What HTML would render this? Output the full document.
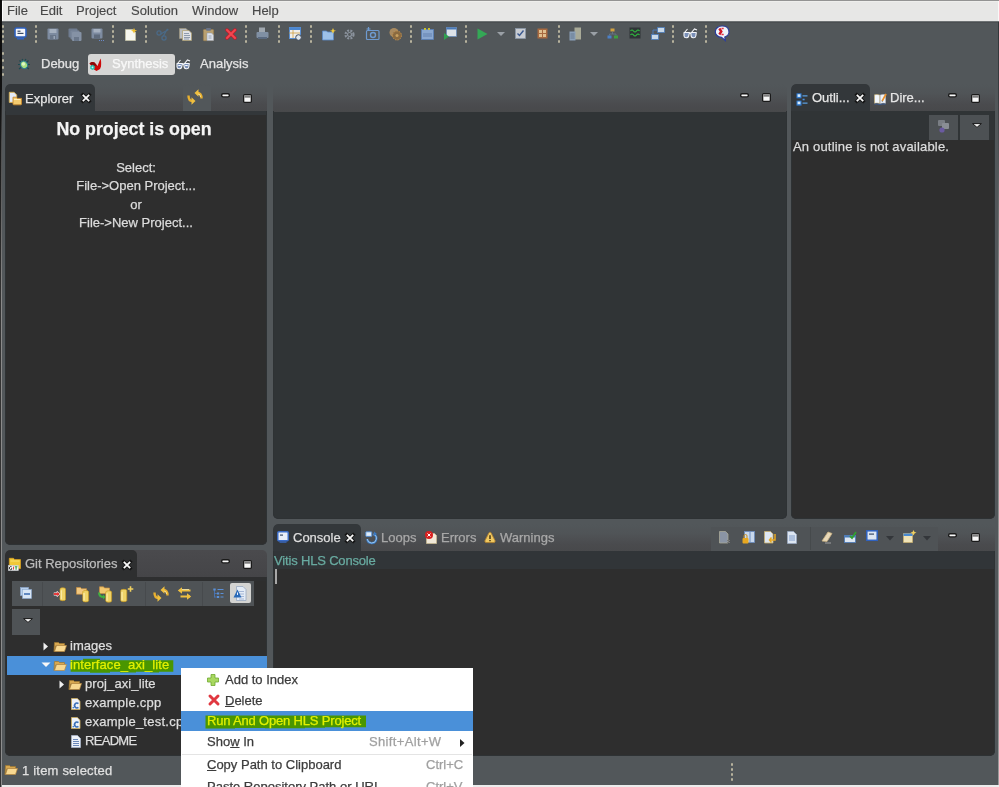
<!DOCTYPE html><html><head><meta charset="utf-8"><style>
*{margin:0;padding:0;box-sizing:border-box}
html,body{width:999px;height:787px;overflow:hidden;background:#52575a;font-family:"Liberation Sans",sans-serif;font-size:13px;color:#dcdcdc;-webkit-font-smoothing:antialiased}
.a{position:absolute}
svg.a{overflow:visible}
.t{position:absolute;white-space:nowrap;line-height:13px;height:13px;will-change:transform;-webkit-text-stroke:0.25px currentColor}
.tt{color:#e6e6e6}
.ti{color:#a8a8a8}
</style></head><body>
<div class="a" style="left:0px;top:0px;width:999px;height:1px;background:#939393;"></div>
<div class="a" style="left:0px;top:1px;width:999px;height:1px;background:#eeeeec;"></div>
<div class="a" style="left:1px;top:2px;width:998px;height:19px;background:#e7e7e6;"></div>
<div class="a" style="left:2px;top:1px;width:1px;height:20px;background:#fbfbfb;"></div>
<div class="a" style="left:0px;top:21px;width:999px;height:1px;background:#6e7274;"></div>
<div class="a" style="left:0px;top:22px;width:999px;height:1px;background:#4a4e51;"></div>
<div class="t " style="left:7px;top:3.5px;color:#484848;-webkit-text-stroke:0.15px #484848">File</div>
<div class="t " style="left:40px;top:3.5px;color:#484848;-webkit-text-stroke:0.15px #484848">Edit</div>
<div class="t " style="left:76px;top:3.5px;color:#484848;-webkit-text-stroke:0.15px #484848">Project</div>
<div class="t " style="left:130.5px;top:3.5px;color:#484848;-webkit-text-stroke:0.15px #484848">Solution</div>
<div class="t " style="left:191.5px;top:3.5px;color:#484848;-webkit-text-stroke:0.15px #484848">Window</div>
<div class="t " style="left:252.2px;top:3.5px;color:#484848;-webkit-text-stroke:0.15px #484848">Help</div>
<div class="a" style="left:2px;top:25px;width:2px;height:3px;background:#b8b39e;border-radius:1px"></div><div class="a" style="left:2px;top:30px;width:2px;height:3px;background:#b8b39e;border-radius:1px"></div><div class="a" style="left:2px;top:35px;width:2px;height:3px;background:#b8b39e;border-radius:1px"></div><div class="a" style="left:2px;top:40px;width:2px;height:3px;background:#b8b39e;border-radius:1px"></div>
<div class="a" style="left:35px;top:25px;width:2px;height:3px;background:#b8b39e;border-radius:1px"></div><div class="a" style="left:35px;top:30px;width:2px;height:3px;background:#b8b39e;border-radius:1px"></div><div class="a" style="left:35px;top:35px;width:2px;height:3px;background:#b8b39e;border-radius:1px"></div><div class="a" style="left:35px;top:40px;width:2px;height:3px;background:#b8b39e;border-radius:1px"></div>
<div class="a" style="left:112px;top:25px;width:2px;height:3px;background:#b8b39e;border-radius:1px"></div><div class="a" style="left:112px;top:30px;width:2px;height:3px;background:#b8b39e;border-radius:1px"></div><div class="a" style="left:112px;top:35px;width:2px;height:3px;background:#b8b39e;border-radius:1px"></div><div class="a" style="left:112px;top:40px;width:2px;height:3px;background:#b8b39e;border-radius:1px"></div>
<div class="a" style="left:145px;top:25px;width:2px;height:3px;background:#b8b39e;border-radius:1px"></div><div class="a" style="left:145px;top:30px;width:2px;height:3px;background:#b8b39e;border-radius:1px"></div><div class="a" style="left:145px;top:35px;width:2px;height:3px;background:#b8b39e;border-radius:1px"></div><div class="a" style="left:145px;top:40px;width:2px;height:3px;background:#b8b39e;border-radius:1px"></div>
<div class="a" style="left:245px;top:25px;width:2px;height:3px;background:#b8b39e;border-radius:1px"></div><div class="a" style="left:245px;top:30px;width:2px;height:3px;background:#b8b39e;border-radius:1px"></div><div class="a" style="left:245px;top:35px;width:2px;height:3px;background:#b8b39e;border-radius:1px"></div><div class="a" style="left:245px;top:40px;width:2px;height:3px;background:#b8b39e;border-radius:1px"></div>
<div class="a" style="left:278px;top:25px;width:2px;height:3px;background:#b8b39e;border-radius:1px"></div><div class="a" style="left:278px;top:30px;width:2px;height:3px;background:#b8b39e;border-radius:1px"></div><div class="a" style="left:278px;top:35px;width:2px;height:3px;background:#b8b39e;border-radius:1px"></div><div class="a" style="left:278px;top:40px;width:2px;height:3px;background:#b8b39e;border-radius:1px"></div>
<div class="a" style="left:310px;top:25px;width:2px;height:3px;background:#b8b39e;border-radius:1px"></div><div class="a" style="left:310px;top:30px;width:2px;height:3px;background:#b8b39e;border-radius:1px"></div><div class="a" style="left:310px;top:35px;width:2px;height:3px;background:#b8b39e;border-radius:1px"></div><div class="a" style="left:310px;top:40px;width:2px;height:3px;background:#b8b39e;border-radius:1px"></div>
<div class="a" style="left:410px;top:25px;width:2px;height:3px;background:#b8b39e;border-radius:1px"></div><div class="a" style="left:410px;top:30px;width:2px;height:3px;background:#b8b39e;border-radius:1px"></div><div class="a" style="left:410px;top:35px;width:2px;height:3px;background:#b8b39e;border-radius:1px"></div><div class="a" style="left:410px;top:40px;width:2px;height:3px;background:#b8b39e;border-radius:1px"></div>
<div class="a" style="left:465px;top:25px;width:2px;height:3px;background:#b8b39e;border-radius:1px"></div><div class="a" style="left:465px;top:30px;width:2px;height:3px;background:#b8b39e;border-radius:1px"></div><div class="a" style="left:465px;top:35px;width:2px;height:3px;background:#b8b39e;border-radius:1px"></div><div class="a" style="left:465px;top:40px;width:2px;height:3px;background:#b8b39e;border-radius:1px"></div>
<div class="a" style="left:558px;top:25px;width:2px;height:3px;background:#b8b39e;border-radius:1px"></div><div class="a" style="left:558px;top:30px;width:2px;height:3px;background:#b8b39e;border-radius:1px"></div><div class="a" style="left:558px;top:35px;width:2px;height:3px;background:#b8b39e;border-radius:1px"></div><div class="a" style="left:558px;top:40px;width:2px;height:3px;background:#b8b39e;border-radius:1px"></div>
<div class="a" style="left:672px;top:25px;width:2px;height:3px;background:#b8b39e;border-radius:1px"></div><div class="a" style="left:672px;top:30px;width:2px;height:3px;background:#b8b39e;border-radius:1px"></div><div class="a" style="left:672px;top:35px;width:2px;height:3px;background:#b8b39e;border-radius:1px"></div><div class="a" style="left:672px;top:40px;width:2px;height:3px;background:#b8b39e;border-radius:1px"></div>
<div class="a" style="left:705px;top:25px;width:2px;height:3px;background:#b8b39e;border-radius:1px"></div><div class="a" style="left:705px;top:30px;width:2px;height:3px;background:#b8b39e;border-radius:1px"></div><div class="a" style="left:705px;top:35px;width:2px;height:3px;background:#b8b39e;border-radius:1px"></div><div class="a" style="left:705px;top:40px;width:2px;height:3px;background:#b8b39e;border-radius:1px"></div>
<div class="a" style="left:2px;top:52px;width:2px;height:3px;background:#b8b39e;border-radius:1px"></div><div class="a" style="left:2px;top:59px;width:2px;height:3px;background:#b8b39e;border-radius:1px"></div><div class="a" style="left:2px;top:66px;width:2px;height:3px;background:#b8b39e;border-radius:1px"></div><div class="a" style="left:2px;top:73px;width:2px;height:3px;background:#b8b39e;border-radius:1px"></div>
<svg class="a" style="left:14px;top:27px" width="13" height="13" viewBox="0 0 13 13"><rect x="1" y="1" width="11" height="9" rx="1.5" fill="#f4f6fb" stroke="#2f62c0" stroke-width="1.6"/><rect x="3.5" y="3.6" width="3" height="1.2" fill="#3a4a66"/><rect x="3.5" y="5.8" width="6" height="1.2" fill="#3a4a66"/><rect x="3" y="11" width="7" height="1.5" fill="#2f62c0"/></svg>
<svg class="a" style="left:47px;top:28px" width="12" height="12" viewBox="0 0 12 12"><rect x="0.5" y="0.5" width="11" height="11" rx="1" fill="#7d8ba0"/><rect x="2.5" y="1" width="7" height="4" fill="#a5b0bf"/><rect x="3" y="7" width="6" height="4.5" fill="#6a778a"/><rect x="6.5" y="8" width="1.5" height="3" fill="#9aa6b6"/></svg>
<svg class="a" style="left:68px;top:28px" width="14" height="13" viewBox="0 0 14 13"><rect x="0.5" y="0.5" width="9" height="9" rx="1" fill="#6f7c90"/><rect x="2.5" y="2.5" width="9" height="9" rx="1" fill="#7a879b"/><rect x="4" y="4" width="9.5" height="9" rx="1" fill="#8592a5"/><rect x="6" y="9" width="5" height="4" fill="#6a778a"/></svg>
<svg class="a" style="left:91px;top:28px" width="14" height="14" viewBox="0 0 14 14"><rect x="0.5" y="0.5" width="11" height="10" rx="1" fill="#7d8ba0"/><rect x="2.5" y="1" width="7" height="3.5" fill="#a5b0bf"/><rect x="3" y="6.5" width="6" height="4" fill="#5f6b7c"/><rect x="8" y="12" width="1" height="1" fill="#6a8ac8"/><rect x="10" y="12" width="1" height="1" fill="#6a8ac8"/><rect x="12" y="12" width="1" height="1" fill="#6a8ac8"/></svg>
<svg class="a" style="left:125px;top:27.5px" width="12" height="13" viewBox="0 0 12 13"><path d="M0.5 1.5h7l3 3v8h-10z" fill="#f6f6f0" stroke="#c8c4a8" stroke-width="0.8"/><path d="M9 0l1 2 2 0.5-2 1-1 2-1-2-2-1 2-0.5z" fill="#f0c030"/></svg>
<svg class="a" style="left:155.5px;top:28px" width="14" height="13" viewBox="0 0 14 13"><circle cx="3" cy="5" r="2.1" fill="none" stroke="#4a6a88" stroke-width="1.3"/><circle cx="8" cy="10" r="2.1" fill="none" stroke="#4a6a88" stroke-width="1.3"/><path d="M4.8 6L12.5 1.5M7.2 8.2L11.5 0.8" stroke="#4a6a88" stroke-width="1.2"/></svg>
<svg class="a" style="left:179px;top:27.5px" width="13" height="13" viewBox="0 0 13 13"><path d="M0.5 0.5h6.5l1.5 1.5v8.5h-8z" fill="#b8bcc0" stroke="#a09880" stroke-width="0.7"/><path d="M3.5 2.5h6.5l2.5 2.5v7.5h-9z" fill="#dfe2e6" stroke="#b0a070" stroke-width="0.7"/><path d="M5 5.5h5M5 7.5h6M5 9.5h6M5 11h5" stroke="#7a8aa0" stroke-width="0.8"/></svg>
<svg class="a" style="left:202.5px;top:27.5px" width="11" height="13" viewBox="0 0 11 13"><rect x="0.4" y="1.5" width="10.2" height="11.2" rx="0.8" fill="#b8a070" stroke="#9a8050" stroke-width="0.6"/><rect x="3" y="0" width="5" height="2.8" rx="1" fill="#6a7488"/><path d="M4 5h4.5l2 2v5.5H4z" fill="#dde2ea" stroke="#8a98b0" stroke-width="0.5"/><path d="M5.5 8h3M5.5 10h3" stroke="#7a8aa0" stroke-width="0.7"/></svg>
<svg class="a" style="left:224.5px;top:28px" width="12" height="12" viewBox="0 0 12 12"><path d="M2 2L10 10M10 2L2 10" stroke="#c81828" stroke-width="3.4" stroke-linecap="round"/><path d="M2 2L10 10M10 2L2 10" stroke="#f04850" stroke-width="2" stroke-linecap="round"/></svg>
<svg class="a" style="left:256px;top:27px" width="13" height="13" viewBox="0 0 13 13"><rect x="3" y="0.5" width="6" height="5" fill="#a0a8b0"/><rect x="0.5" y="5" width="12" height="6" rx="1" fill="#8090a4"/><rect x="2" y="10" width="9" height="2" fill="#5a6a80"/></svg>
<svg class="a" style="left:289px;top:27px" width="13" height="14" viewBox="0 0 13 14"><rect x="0.5" y="0.5" width="11" height="11" fill="#eeeeee" stroke="#5b8fd0"/><rect x="0.5" y="0.5" width="11" height="2.5" fill="#4a86d0"/><path d="M4 3v8M0 6h11" stroke="#d0a040" stroke-width="0.8"/><circle cx="9.5" cy="10.5" r="2.8" fill="#dfe6ee" stroke="#404a58" stroke-width="1"/></svg>
<svg class="a" style="left:322px;top:27.5px" width="14" height="13" viewBox="0 0 14 13"><path d="M0.5 3h4l1 1h6v8h-11z" fill="#9cc0e8" stroke="#5a8ac8" stroke-width="0.8"/><path d="M11 0l1 2.2 2 .6-2 .8-1 2.2-1-2.2-2-.8 2-.6z" fill="#f0c840"/></svg>
<svg class="a" style="left:343px;top:27.5px" width="13" height="13" viewBox="0 0 13 13"><circle cx="6.5" cy="6.5" r="4" fill="none" stroke="#8a929c" stroke-width="2.2" stroke-dasharray="2 1.2"/><circle cx="6.5" cy="6.5" r="2" fill="none" stroke="#8a929c" stroke-width="1.2"/></svg>
<svg class="a" style="left:366px;top:27px" width="14" height="14" viewBox="0 0 14 14"><rect x="0.5" y="3.5" width="12.5" height="9" rx="1" fill="none" stroke="#6e9ad0" stroke-width="1.2"/><circle cx="7" cy="8" r="2.5" fill="none" stroke="#6e9ad0" stroke-width="1.4"/><path d="M2.5 0v4M0.5 2h4" stroke="#6e9ad0" stroke-width="1.2"/></svg>
<svg class="a" style="left:389px;top:27px" width="13" height="14" viewBox="0 0 13 14"><circle cx="5" cy="5.5" r="4.5" fill="#a88a60"/><circle cx="8" cy="8.5" r="4.5" fill="#8a6a40" stroke="#c09050" stroke-width="1" stroke-dasharray="1.5 1"/><circle cx="8" cy="8.5" r="1.5" fill="#c8a060"/></svg>
<svg class="a" style="left:421px;top:27.5px" width="13" height="12" viewBox="0 0 13 12"><rect x="0.5" y="1.5" width="12" height="10" fill="#8aa8d0" stroke="#5a80b8" stroke-width="0.8"/><rect x="3" y="0" width="2" height="2" fill="#c8c030"/><rect x="7" y="0" width="2" height="2" fill="#c8c030"/><path d="M2 6h9M2 8h9" stroke="#5a7aa8" stroke-width="0.8"/></svg>
<svg class="a" style="left:444px;top:27px" width="13" height="14" viewBox="0 0 13 14"><rect x="2.5" y="0.5" width="10" height="9" fill="#dde2e8" stroke="#6a8cb8" stroke-width="0.8"/><rect x="2.5" y="0.5" width="10" height="2" fill="#4a7ab8"/><path d="M0 6l5 3.5-5 3.5z" fill="#30a050"/></svg>
<svg class="a" style="left:477px;top:28px" width="11" height="12" viewBox="0 0 11 12"><path d="M0.5 0.5L10.5 6 0.5 11.5z" fill="#34a856"/></svg>
<svg class="a" style="left:497px;top:32px" width="9" height="5" viewBox="0 0 9 5"><path d="M0 0h8l-4 4z" fill="#9aa0a6"/></svg>
<svg class="a" style="left:515px;top:27.5px" width="11" height="11" viewBox="0 0 11 11"><rect x="0.5" y="0.5" width="10" height="10" fill="#c8ccd2" stroke="#8a98a8" stroke-width="0.8"/><path d="M2.5 5.5l2 2 4-5" stroke="#3a5890" stroke-width="1.4" fill="none"/></svg>
<svg class="a" style="left:537px;top:27.5px" width="11" height="11" viewBox="0 0 11 11"><rect x="0.5" y="0.5" width="10" height="10" fill="#a86a40"/><rect x="2" y="2" width="3" height="3" fill="#e0c090"/><rect x="6" y="2" width="3" height="3" fill="#e0c090"/><rect x="2" y="6" width="3" height="3" fill="#e0c090"/><rect x="6" y="6" width="3" height="3" fill="#e0c090"/></svg>
<svg class="a" style="left:569px;top:27px" width="13" height="14" viewBox="0 0 13 14"><rect x="5.5" y="0.5" width="6.5" height="12" fill="#a8aa98"/><rect x="0.5" y="4.5" width="6" height="9" fill="#8aa0b8"/><path d="M1.5 7h4M1.5 9h4M1.5 11h4" stroke="#5a6a80" stroke-width="0.7"/></svg>
<svg class="a" style="left:590px;top:32px" width="9" height="5" viewBox="0 0 9 5"><path d="M0 0h8l-4 4z" fill="#9aa0a6"/></svg>
<svg class="a" style="left:607px;top:27.5px" width="12" height="12" viewBox="0 0 12 12"><rect x="3.5" y="0.5" width="4" height="3" fill="#d0a040"/><rect x="0.5" y="7.5" width="4" height="3" fill="#4a80c8"/><rect x="7" y="7.5" width="4" height="3" fill="#40a040"/><path d="M5.5 3.5v2.5M2.5 6h6.5v1.5M2.5 6v1.5" stroke="#6a7a8a" stroke-width="0.8" fill="none"/></svg>
<svg class="a" style="left:629px;top:27px" width="12" height="13" viewBox="0 0 12 13"><rect x="0.5" y="0.5" width="11" height="11" fill="#2e3436"/><path d="M1.5 4q1.5-2 3 0t3 0 3 0M1.5 8q1.5-2 3 0t3 0 3 0" stroke="#30c040" stroke-width="1.1" fill="none"/></svg>
<svg class="a" style="left:651px;top:26.5px" width="14" height="14" viewBox="0 0 14 14"><rect x="6.5" y="0.5" width="7" height="5" fill="#c8d8e8" stroke="#4a7ab8" stroke-width="0.8"/><rect x="0.5" y="7.5" width="7" height="5" fill="#c8d8e8" stroke="#4a7ab8" stroke-width="0.8"/><path d="M2 7V3h4" stroke="#4a7ab8" stroke-width="1" fill="none"/></svg>
<svg class="a" style="left:683px;top:27.5px" width="15" height="11" viewBox="0 0 15 11"><path d="M1 4.5h5.5l-0.8 3.5q-0.5 1.8-2.3 1.8h-0.3q-1.8 0-2.1-1.8z M7.8 4.5h5.5l-0.5 3.5q-0.3 1.8-2.1 1.8h-0.3q-1.8 0-2.3-1.8z" fill="#7a90b8" stroke="#f4f6fa" stroke-width="1.1" stroke-linejoin="round"/><path d="M6.5 5.5h1.3" stroke="#f4f6fa" stroke-width="1.2"/><path d="M1.5 4.5L4.5 1M8.5 4.5L11.5 1 14 2" stroke="#f4f6fa" stroke-width="1.1" fill="none"/></svg>
<svg class="a" style="left:715px;top:25px" width="15" height="16" viewBox="0 0 15 16"><path d="M7.3 1A6.6 5.7 0 1 0 6.5 12.4L10.3 15.5 9.8 12A6.6 5.7 0 0 0 7.3 1z" fill="#eef4fa" stroke="#2a3c9c" stroke-width="1.2"/><path d="M4.3 3.5L6.3 6.5 4.3 9.5" stroke="#d01828" stroke-width="2.4" fill="none"/><path d="M6.5 3.5h2.2M6.5 9.5h2.2" stroke="#e83040" stroke-width="1.6"/></svg>
<svg class="a" style="left:17px;top:57px" width="14" height="14" viewBox="0 0 14 14"><path d="M2.5 3.5l2 2M11.5 3.5l-2 2M1 7.5h2.5M10.5 7.5H13M2 12l2.5-2M12 12l-2.5-2M5 2l1.5 2M9 2L7.5 4" stroke="#1e4a50" stroke-width="1.2"/><ellipse cx="7" cy="7.8" rx="3.4" ry="3.9" transform="rotate(-35 7 7.8)" fill="#a8e080" stroke="#2a7a90" stroke-width="1.1"/><ellipse cx="6.5" cy="7" rx="1.6" ry="1.8" fill="#e0f8c8"/></svg>
<div class="t " style="left:40.5px;top:57px;color:#e4e4e4">Debug</div>
<div class="a" style="left:87.6px;top:54px;width:87.3px;height:21.3px;background:#d6d6d5;border-radius:3px"></div>
<svg class="a" style="left:88.5px;top:57px" width="14" height="15" viewBox="0 0 14 15"><path d="M0.5 6.5Q3 4.2 5.5 5.5L8.5 9 11.5 1.5Q12.5 4 12 9.5L11 12 7.5 14 5 12.5z" fill="#cc0a0a"/><path d="M0.5 6.5Q3 4.2 5.5 5.5L8 8.5 4 9z" fill="#8a0808"/><path d="M3.5 7.8l2.2 1.3v2.6l-2.2 1.3-2.2-1.3V9.1z" fill="#20c0b0"/><circle cx="3.5" cy="10.4" r="0.9" fill="#d8f0ec"/></svg>
<div class="t " style="left:112px;top:57px;color:#f8f8f8">Synthesis</div>
<svg class="a" style="left:176px;top:59px" width="15" height="11" viewBox="0 0 15 11"><path d="M1 4.5h5.5l-0.8 3.5q-0.5 1.8-2.3 1.8h-0.3q-1.8 0-2.1-1.8z M7.8 4.5h5.5l-0.5 3.5q-0.3 1.8-2.1 1.8h-0.3q-1.8 0-2.3-1.8z" fill="#7a90b8" stroke="#f4f6fa" stroke-width="1.1" stroke-linejoin="round"/><path d="M6.5 5.5h1.3" stroke="#f4f6fa" stroke-width="1.2"/><path d="M1.5 4.5L4.5 1M8.5 4.5L11.5 1 14 2" stroke="#f4f6fa" stroke-width="1.1" fill="none"/><path d="M2.3 6.5h2.5M9.2 6.5h2.5" stroke="#fff" stroke-width="1"/></svg>
<div class="t " style="left:200.4px;top:57px;color:#e4e4e4">Analysis</div>
<div class="a" style="left:5px;top:84px;width:262px;height:461px;border-radius:5px;overflow:hidden"><div class="a" style="left:0;top:0;width:100%;height:27px;background:linear-gradient(#52575a,#505457 35%,#4a4b4e 75%,#48494b)"></div><div class="a" style="left:0;top:27px;right:0;bottom:0;background:#2e2e2e"></div><div class="a" style="left:0px;top:0px;width:90.2px;height:30.5px;background:#33373a;border-radius:5px 5px 0 0"></div><div class="a" style="left:0px;top:27px;width:262px;height:3.5px;background:#33373a;"></div><div class="a" style="left:0;top:27px;right:0;bottom:0;border:1px solid #2e3234;border-top:none;border-radius:0 0 5px 5px"></div></div>
<svg class="a" style="left:8px;top:91px" width="15" height="15" viewBox="0 0 15 15"><path d="M1.3 1.3h4.8l2.6 2.6v7.5H1.3z" fill="#e4ecf8" stroke="#d8b050" stroke-width="0.9"/><path d="M5 6.2h3.2l1 1.2h4.3v5.6q0 0.8-0.8 0.8H5.8q-0.8 0-0.8-0.8z" fill="#f4cc70" stroke="#c88a30" stroke-width="0.9"/><path d="M6 8.5h6.5" stroke="#fff0b8" stroke-width="1"/></svg>
<div class="t tt" style="left:24.5px;top:91.6px;">Explorer</div>
<svg class="a" style="left:81px;top:93px" width="10" height="10" viewBox="0 0 10 10"><path d="M1.8 1.8L8.2 8.2M8.2 1.8L1.8 8.2" stroke="#151515" stroke-width="3.4" stroke-linecap="square"/><path d="M1.8 1.8L8.2 8.2M8.2 1.8L1.8 8.2" stroke="#fafafa" stroke-width="1.8" stroke-linecap="butt"/></svg>
<div class="a" style="left:182.5px;top:86px;width:28.5px;height:25px;background:#52575a;"></div>
<svg class="a" style="left:185px;top:87px" width="20" height="20" viewBox="0 0 20 20"><defs><linearGradient id="gy" x1="0" y1="0" x2="1" y2="1"><stop offset="0" stop-color="#fff2b0"/><stop offset="1" stop-color="#d89418"/></linearGradient></defs><path d="M16.5 11.5Q16.5 6 12.5 6M3.5 8.5Q3.5 14 7.5 14" stroke="#e8b030" stroke-width="2.4" fill="none"/><path d="M9.5 6L13.5 2.3V9.7z M10.5 14L6.5 10.3V17.7z" fill="#f0c040"/><path d="M15.5 10Q15.5 7 13 7" stroke="#fff0b0" stroke-width="0.8" fill="none"/></svg>
<svg class="a" style="left:220.5px;top:93.1px" width="9" height="5" viewBox="0 0 9 5"><rect x="0" y="0" width="9" height="4.6" rx="2.1" fill="#1a1a1a"/><rect x="1.4" y="1.4" width="6.2" height="1.8" rx="0.6" fill="#f8f8f8"/></svg>
<svg class="a" style="left:243.2px;top:93.5px" width="9" height="9" viewBox="0 0 9 9"><rect x="0" y="0" width="9" height="9" rx="1.8" fill="#1a1a1a"/><rect x="1.3" y="1.3" width="6.4" height="6.4" rx="0.5" fill="#f8f8f8"/><rect x="1.3" y="1.3" width="6.4" height="2.4" fill="#7e7e7e"/></svg>
<div class="t " style="left:0px;top:121px;left:3px;width:262px;text-align:center;font-weight:bold;font-size:17.8px;line-height:17.5px;height:18px;color:#f4f4f4">No project is open</div>
<div class="t " style="left:0px;top:161.0px;left:5px;width:262px;text-align:center;color:#dcdcdc">Select:</div>
<div class="t " style="left:0px;top:179.35px;left:5px;width:262px;text-align:center;color:#dcdcdc">File-&gt;Open Project...</div>
<div class="t " style="left:0px;top:197.7px;left:5px;width:262px;text-align:center;color:#dcdcdc">or</div>
<div class="t " style="left:0px;top:216.05px;left:5px;width:262px;text-align:center;color:#dcdcdc">File-&gt;New Project...</div>
<div class="a" style="left:273px;top:84px;width:514px;height:435px;border-radius:5px;overflow:hidden"><div class="a" style="left:0;top:0;width:100%;height:27.5px;background:linear-gradient(#52575a,#505457 35%,#4a4b4e 75%,#48494b)"></div><div class="a" style="left:0;top:27.5px;right:0;bottom:0;background:#303436"></div><div class="a" style="left:0;top:27px;right:0;bottom:0;border:1px solid #2e3234;border-top:none;border-radius:0 0 5px 5px"></div></div>
<svg class="a" style="left:739.7px;top:93px" width="9" height="5" viewBox="0 0 9 5"><rect x="0" y="0" width="9" height="4.6" rx="2.1" fill="#1a1a1a"/><rect x="1.4" y="1.4" width="6.2" height="1.8" rx="0.6" fill="#f8f8f8"/></svg>
<svg class="a" style="left:762.3px;top:93.3px" width="9" height="9" viewBox="0 0 9 9"><rect x="0" y="0" width="9" height="9" rx="1.8" fill="#1a1a1a"/><rect x="1.3" y="1.3" width="6.4" height="6.4" rx="0.5" fill="#f8f8f8"/><rect x="1.3" y="1.3" width="6.4" height="2.4" fill="#7e7e7e"/></svg>
<div class="a" style="left:791px;top:84px;width:204px;height:435px;border-radius:5px;overflow:hidden"><div class="a" style="left:0;top:0;width:100%;height:27px;background:linear-gradient(#52575a,#505457 35%,#4a4b4e 75%,#48494b)"></div><div class="a" style="left:0;top:27px;right:0;bottom:0;background:#2e2e2e"></div><div class="a" style="left:0px;top:0px;width:78.8px;height:30px;background:#33373a;border-radius:5px 5px 0 0"></div><div class="a" style="left:0px;top:27px;width:204px;height:29px;background:#303436;"></div><div class="a" style="left:138px;top:30.5px;width:28.8px;height:25.5px;background:#4d5154;"></div><div class="a" style="left:169px;top:30.5px;width:28.6px;height:25.5px;background:#4d5154;"></div><div class="a" style="left:0;top:27px;right:0;bottom:0;border:1px solid #2e3234;border-top:none;border-radius:0 0 5px 5px"></div></div>
<svg class="a" style="left:795.5px;top:92.5px" width="12" height="13" viewBox="0 0 12 13"><rect x="0.5" y="0.3" width="5" height="5" fill="#2f7ad0"/><rect x="1.6" y="1.3" width="2.8" height="2.6" fill="#d8ecfc"/><rect x="0.5" y="7.6" width="5" height="5" fill="#2f7ad0"/><rect x="1.6" y="8.6" width="2.8" height="2.6" fill="#d8ecfc"/><path d="M6.5 2.8h5M6.5 10.2h5" stroke="#5a9ee0" stroke-width="1.3"/><rect x="6.6" y="5.7" width="2" height="1.6" fill="#4a90e0"/></svg>
<div class="t tt" style="left:812.2px;top:91px;">Outli...</div>
<svg class="a" style="left:854.5px;top:93px" width="10" height="10" viewBox="0 0 10 10"><path d="M1.8 1.8L8.2 8.2M8.2 1.8L1.8 8.2" stroke="#151515" stroke-width="3.4" stroke-linecap="square"/><path d="M1.8 1.8L8.2 8.2M8.2 1.8L1.8 8.2" stroke="#fafafa" stroke-width="1.8" stroke-linecap="butt"/></svg>
<svg class="a" style="left:874px;top:92px" width="14" height="13" viewBox="0 0 14 13"><path d="M0.5 2.8Q3 2 5.8 3V11.5Q3 10.6 0.5 11.3z" fill="#f2f6fc" stroke="#c8b070" stroke-width="0.6"/><path d="M6.2 3Q9 2 11.5 2.8V11.3Q9 10.6 6.2 11.5z" fill="#eef2f8" stroke="#b8c0c8" stroke-width="0.6"/><path d="M0.5 12.2Q3 11.5 6 12.5Q9 11.5 11.5 12.2" stroke="#3a5a90" stroke-width="1" fill="none"/><path d="M7.5 8.5L11.3 1.5 12.8 2.4 9 9.3z" fill="#e8902c"/><path d="M7.5 8.5L8 9.8 9 9.3z" fill="#404040"/></svg>
<div class="t tt" style="left:889.6px;top:91px;">Dire...</div>
<svg class="a" style="left:948.2px;top:93.2px" width="9" height="5" viewBox="0 0 9 5"><rect x="0" y="0" width="9" height="4.6" rx="2.1" fill="#1a1a1a"/><rect x="1.4" y="1.4" width="6.2" height="1.8" rx="0.6" fill="#f8f8f8"/></svg>
<svg class="a" style="left:971.2px;top:93.5px" width="9" height="9" viewBox="0 0 9 9"><rect x="0" y="0" width="9" height="9" rx="1.8" fill="#1a1a1a"/><rect x="1.3" y="1.3" width="6.4" height="6.4" rx="0.5" fill="#f8f8f8"/><rect x="1.3" y="1.3" width="6.4" height="2.4" fill="#7e7e7e"/></svg>
<svg class="a" style="left:937px;top:119px" width="14" height="14" viewBox="0 0 14 14"><rect x="1" y="1" width="7" height="6" rx="1" fill="#7a7e84"/><rect x="5" y="4" width="7" height="6" rx="1" fill="#8a8e94"/><circle cx="5" cy="11" r="2.6" fill="#6a5aa0"/></svg>
<svg class="a" style="left:971.5px;top:122.8px" width="10" height="5" viewBox="0 0 10 5"><path d="M0.6 0.6h8.8l-4.4 3.8z" fill="#f4f4f4" stroke="#151515" stroke-width="1"/></svg>
<div class="t " style="left:793.2px;top:140.3px;color:#dcdcdc;letter-spacing:0.18px">An outline is not available.</div>
<div class="a" style="left:273px;top:524px;width:722px;height:232px;border-radius:5px;overflow:hidden"><div class="a" style="left:0;top:0;width:100%;height:27px;background:linear-gradient(#52575a,#505457 35%,#4a4b4e 75%,#48494b)"></div><div class="a" style="left:0;top:27px;right:0;bottom:0;background:#2e2e2e"></div><div class="a" style="left:0px;top:0px;width:87.5px;height:30px;background:#33373a;border-radius:5px 5px 0 0"></div><div class="a" style="left:0px;top:27px;width:722px;height:17.5px;background:#313538;"></div><div class="a" style="left:438px;top:2.5px;width:227px;height:24px;background:#4f5356;"></div><div class="a" style="left:536.5px;top:3px;width:1px;height:23px;background:#464a4c;"></div><div class="a" style="left:0;top:27px;right:0;bottom:0;border:1px solid #2e3234;border-top:none;border-radius:0 0 5px 5px"></div></div>
<svg class="a" style="left:276.5px;top:530.5px" width="12" height="12" viewBox="0 0 12 12"><rect x="0.8" y="0.8" width="10.4" height="9" rx="1" fill="#e8eef8" stroke="#3a6cc8" stroke-width="1.4"/><rect x="3" y="3.5" width="3" height="1.2" fill="#3a4a66"/><rect x="2.5" y="10.5" width="7" height="1.2" fill="#3a6cc8"/></svg>
<div class="t " style="left:292.7px;top:530.5px;color:#dedede">Console</div>
<svg class="a" style="left:344.5px;top:532.5px" width="10" height="10" viewBox="0 0 10 10"><path d="M1.8 1.8L8.2 8.2M8.2 1.8L1.8 8.2" stroke="#151515" stroke-width="3.4" stroke-linecap="square"/><path d="M1.8 1.8L8.2 8.2M8.2 1.8L1.8 8.2" stroke="#fafafa" stroke-width="1.8" stroke-linecap="butt"/></svg>
<svg class="a" style="left:365px;top:530.5px" width="13" height="13" viewBox="0 0 13 13"><path d="M8.5 3.2A4.6 4.6 0 1 1 2.2 8" stroke="#3a78c0" stroke-width="2.2" fill="none"/><path d="M8.5 3.2A4.6 4.6 0 1 1 2.2 8" stroke="#a8d0f0" stroke-width="0.9" fill="none"/><rect x="0.8" y="0.8" width="6" height="4.6" rx="0.6" fill="#e0ecf8" stroke="#4a88d0" stroke-width="0.9"/><path d="M9 0.5l3 2.5-3.3 1.8z" fill="#3a78c0"/></svg>
<div class="t ti" style="left:381px;top:530.5px;">Loops</div>
<svg class="a" style="left:423.5px;top:530px" width="13" height="14" viewBox="0 0 13 14"><path d="M2.5 3.5h8l2 2v8h-10z" fill="#f0e8d8" stroke="#c8b890" stroke-width="0.8"/><circle cx="5" cy="5" r="4" fill="#d82020"/><path d="M3.5 3.5l3 3M6.5 3.5l-3 3" stroke="#fff" stroke-width="1"/></svg>
<div class="t ti" style="left:440.8px;top:530.5px;">Errors</div>
<svg class="a" style="left:484px;top:530.5px" width="12" height="13" viewBox="0 0 12 13"><path d="M6 1.2Q6.8 1.2 7.3 2.2L11 9.6Q11.6 11.4 10 11.6H2Q0.4 11.4 1 9.6L4.7 2.2Q5.2 1.2 6 1.2z" fill="#f0c860" stroke="#b08030" stroke-width="0.9"/><path d="M6 4.3v3.6M6 9v1.3" stroke="#3a2a10" stroke-width="1.4"/></svg>
<div class="t ti" style="left:500.3px;top:530.5px;">Warnings</div>
<svg class="a" style="left:719px;top:531px" width="12" height="13" viewBox="0 0 12 13"><path d="M0.5 0.5h6l2.5 2.5v9h-8.5z" fill="#8a94a4" stroke="#a8a898" stroke-width="0.8"/><path d="M8 9l3 3M11 9l-3 3" stroke="#7a7a7a" stroke-width="1"/></svg>
<svg class="a" style="left:741.5px;top:531px" width="13" height="13" viewBox="0 0 13 13"><rect x="2.5" y="0.5" width="10" height="11" fill="#c8d8ec" stroke="#6a8cc0" stroke-width="0.8"/><path d="M8 1v10" stroke="#6a8cc0"/><rect x="0.5" y="7" width="6" height="5.5" rx="1" fill="#e8a820"/><path d="M2 7V5a1.5 1.5 0 0 1 3 0v2" stroke="#c89020" fill="none"/></svg>
<svg class="a" style="left:763.5px;top:530.5px" width="13" height="13" viewBox="0 0 13 13"><path d="M0.5 0.5h6l2.5 2.5v9h-8.5z" fill="#dde6f2" stroke="#c8b070" stroke-width="0.8"/><path d="M11 3v6H5.5M7.5 6.5l-2 2.5 2 2.5" stroke="#e8a820" stroke-width="1.5" fill="none"/></svg>
<svg class="a" style="left:787px;top:531px" width="11" height="13" viewBox="0 0 11 13"><path d="M0.5 0.5h6l3 3v9h-9z" fill="#dde6f2" stroke="#9aaac0" stroke-width="0.8"/><path d="M2 5h6M2 7h6M2 9h6" stroke="#6a8cc0" stroke-width="0.8"/></svg>
<svg class="a" style="left:820.5px;top:531px" width="13" height="13" viewBox="0 0 13 13"><path d="M1 10l6-9 4 1.5-5 8z" fill="#e8d8b8" stroke="#c8b080" stroke-width="0.8"/><path d="M4 12h6" stroke="#a0a0a0" stroke-width="1"/></svg>
<svg class="a" style="left:843.5px;top:530px" width="13" height="14" viewBox="0 0 13 14"><rect x="0.5" y="5.5" width="11" height="7" fill="#dde6f2" stroke="#4a7ab8" stroke-width="0.8"/><rect x="0.5" y="5.5" width="11" height="2" fill="#4a7ab8"/><path d="M6 6l2 2 4-6" stroke="#30a030" stroke-width="1.8" fill="none"/></svg>
<svg class="a" style="left:866px;top:530px" width="12" height="13" viewBox="0 0 12 13"><rect x="0.8" y="0.8" width="10.4" height="9.5" fill="#dde6f2" stroke="#2f62c0" stroke-width="1.5"/><rect x="3" y="3.5" width="5" height="1.2" fill="#3a4a66"/></svg>
<svg class="a" style="left:885.5px;top:535.5px" width="8" height="5" viewBox="0 0 8 5"><path d="M0 0h8l-4 4.5z" fill="#33363a"/></svg>
<svg class="a" style="left:903px;top:530px" width="13" height="14" viewBox="0 0 13 14"><path d="M0.5 3.5h9v9h-9z" fill="#f0e4b8" stroke="#c8b070" stroke-width="0.8"/><rect x="0.5" y="3.5" width="9" height="2.5" fill="#4a8ad0"/><path d="M10.5 0l1 2 2 .5-2 1-1 2-1-2-2-1 2-.5z" fill="#f0d060"/></svg>
<svg class="a" style="left:922.5px;top:535.5px" width="8" height="5" viewBox="0 0 8 5"><path d="M0 0h8l-4 4.5z" fill="#33363a"/></svg>
<svg class="a" style="left:948.2px;top:533px" width="9" height="5" viewBox="0 0 9 5"><rect x="0" y="0" width="9" height="4.6" rx="2.1" fill="#1a1a1a"/><rect x="1.4" y="1.4" width="6.2" height="1.8" rx="0.6" fill="#f8f8f8"/></svg>
<svg class="a" style="left:971.2px;top:533px" width="9" height="9" viewBox="0 0 9 9"><rect x="0" y="0" width="9" height="9" rx="1.8" fill="#1a1a1a"/><rect x="1.3" y="1.3" width="6.4" height="6.4" rx="0.5" fill="#f8f8f8"/><rect x="1.3" y="1.3" width="6.4" height="2.4" fill="#7e7e7e"/></svg>
<div class="t " style="left:274px;top:553.7px;color:#68aaa0;letter-spacing:-0.17px">Vitis HLS Console</div>
<div class="a" style="left:275.3px;top:569px;width:1.6px;height:14.5px;background:#a8a8a8;"></div>
<div class="a" style="left:5px;top:550px;width:262px;height:206px;border-radius:5px;overflow:hidden"><div class="a" style="left:0;top:0;width:100%;height:27px;background:linear-gradient(#4a4a4d,#454548)"></div><div class="a" style="left:0;top:27px;right:0;bottom:0;background:#2e2e2e"></div><div class="a" style="left:0px;top:0px;width:132px;height:27px;background:#2e2f30;border-radius:5px 5px 0 0"></div><div class="a" style="left:0px;top:27px;width:262px;height:4px;background:#2e2f30;"></div><div class="a" style="left:6.6px;top:30.7px;width:242.5px;height:25.7px;background:#4f5356;"></div><div class="a" style="left:36.5px;top:31.5px;width:1px;height:24px;background:#474a4d;"></div><div class="a" style="left:140px;top:31.5px;width:1px;height:24px;background:#474a4d;"></div><div class="a" style="left:196.8px;top:31.5px;width:1px;height:24px;background:#474a4d;"></div><div class="a" style="left:225.4px;top:33px;width:21px;height:20.4px;background:#d4d4d2;border-radius:2px"></div><div class="a" style="left:6.6px;top:59px;width:28.4px;height:25.7px;background:#4f5356;"></div><div class="a" style="left:0px;top:86px;width:262px;height:20px;background:#2e2e2e;"></div><div class="a" style="left:0;top:27px;right:0;bottom:0;border:1px solid #2e3234;border-top:none;border-radius:0 0 5px 5px"></div></div>
<svg class="a" style="left:8px;top:557px" width="14" height="14" viewBox="0 0 14 14"><path d="M1.3 1.3h4.2l1.2 1.3h5.8v9h-11.2z" fill="#f0c838" stroke="#d8a020" stroke-width="0.8"/><path d="M2.5 4h9" stroke="#f8e070" stroke-width="1"/><rect x="0.3" y="8.3" width="10.2" height="5.4" fill="#f4f6f8" stroke="#b8bcc0" stroke-width="0.5"/><path d="M3.6 9.8A1.4 1.6 0 1 0 3.6 12.4V11.2" stroke="#303030" stroke-width="1" fill="none"/><path d="M5.5 9.6v3" stroke="#e04848" stroke-width="1.1"/><path d="M6.8 9.7h2.6M8.1 9.7v3" stroke="#30a040" stroke-width="1.1"/></svg>
<div class="t " style="left:25px;top:557px;color:#bcbcbc">Git Repositories</div>
<svg class="a" style="left:122px;top:559.5px" width="10" height="10" viewBox="0 0 10 10"><path d="M1.8 1.8L8.2 8.2M8.2 1.8L1.8 8.2" stroke="#151515" stroke-width="3.4" stroke-linecap="square"/><path d="M1.8 1.8L8.2 8.2M8.2 1.8L1.8 8.2" stroke="#fafafa" stroke-width="1.8" stroke-linecap="butt"/></svg>
<svg class="a" style="left:220.5px;top:559.3px" width="9" height="5" viewBox="0 0 9 5"><rect x="0" y="0" width="9" height="4.6" rx="2.1" fill="#1a1a1a"/><rect x="1.4" y="1.4" width="6.2" height="1.8" rx="0.6" fill="#f8f8f8"/></svg>
<svg class="a" style="left:243.2px;top:559.5px" width="9" height="9" viewBox="0 0 9 9"><rect x="0" y="0" width="9" height="9" rx="1.8" fill="#1a1a1a"/><rect x="1.3" y="1.3" width="6.4" height="6.4" rx="0.5" fill="#f8f8f8"/><rect x="1.3" y="1.3" width="6.4" height="2.4" fill="#7e7e7e"/></svg>
<svg class="a" style="left:20px;top:587px" width="12" height="12" viewBox="0 0 12 12"><rect x="0.5" y="0.5" width="8" height="8" fill="#b8d0ec" stroke="#8aa8d0" stroke-width="0.6"/><rect x="2.5" y="2.5" width="9" height="9" fill="#d8e6f6" stroke="#8aa8d0" stroke-width="0.6"/><path d="M4 7h6" stroke="#3a6ab0" stroke-width="1.5"/></svg>
<svg class="a" style="left:52.5px;top:586.5px" width="14" height="14" viewBox="0 0 14 14"><path d="M7 2.0a2.75 1.2 0 0 1 5.5 0v10.5a2.75 1.2 0 0 1 -5.5 0z" fill="#f0d468" stroke="#c89a20" stroke-width="0.7"/><path d="M8.2 3.3v9.0" stroke="#fff4c0" stroke-width="1"/><path d="M0.8 7h4.5" stroke="#fff" stroke-width="3"/><path d="M4 4.2l3 2.8-3 2.8z" fill="#e02828" stroke="#fff" stroke-width="0.6"/><path d="M0.8 7h4" stroke="#e02828" stroke-width="1.8"/></svg>
<svg class="a" style="left:75.5px;top:586px" width="14" height="15" viewBox="0 0 14 15"><path d="M0.5 1.5h4l1 1.2h5v5.5h-10z" fill="#f2c880" stroke="#c89040" stroke-width="0.7"/><path d="M6.8 5.7a2.9 1.2 0 0 1 5.8 0v9a2.9 1.2 0 0 1 -5.8 0z" fill="#f0d468" stroke="#c89a20" stroke-width="0.7"/><path d="M8.0 7.0v7.5" stroke="#fff4c0" stroke-width="1"/></svg>
<svg class="a" style="left:97.5px;top:585.5px" width="15" height="15" viewBox="0 0 15 15"><path d="M1.5 0.8h4l1 1.2h5v5.5h-10z" fill="#f2c870" stroke="#c89040" stroke-width="0.7"/><path d="M7.8 6.0a2.9 1.2 0 0 1 5.8 0v9a2.9 1.2 0 0 1 -5.8 0z" fill="#f0d468" stroke="#c89a20" stroke-width="0.7"/><path d="M9.0 7.3v7.5" stroke="#fff4c0" stroke-width="1"/><path d="M1 6.5q0 4.5 5 4.5" stroke="#40b040" stroke-width="2" fill="none"/><path d="M5 8.5l2.5 2.5-2.5 2.5z" fill="#40b040"/></svg>
<svg class="a" style="left:120px;top:586px" width="14" height="15" viewBox="0 0 14 15"><path d="M0.8 4.5a3.0 1.2 0 0 1 6 0v10a3.0 1.2 0 0 1 -6 0z" fill="#f0d468" stroke="#c89a20" stroke-width="0.7"/><path d="M2.0 5.8v8.5" stroke="#fff4c0" stroke-width="1"/><path d="M10.5 0.3v5.5M7.8 3h5.5" stroke="#f0d060" stroke-width="1.6"/></svg>
<svg class="a" style="left:151px;top:583.5px" width="20" height="20" viewBox="0 0 20 20"><path d="M16.5 11.5Q16.5 6 12.5 6M3.5 8.5Q3.5 14 7.5 14" stroke="#e8b030" stroke-width="2.4" fill="none"/><path d="M9.5 6L13.5 2.3V9.7z M10.5 14L6.5 10.3V17.7z" fill="#f0c040"/><path d="M15.5 10Q15.5 7 13 7" stroke="#fff0b0" stroke-width="0.8" fill="none"/></svg>
<svg class="a" style="left:177px;top:587px" width="15" height="14" viewBox="0 0 15 14"><path d="M13.5 3.5H4.5M13 9.5H3.5" stroke="#f0c040" stroke-width="2" fill="none"/><path d="M0.8 3.5L5 0.3v6.4z M14.2 9.5L10 6.3v6.4z" fill="#f0c040"/><path d="M5 2.5h7" stroke="#fff0b0" stroke-width="0.8"/></svg>
<svg class="a" style="left:213px;top:588px" width="11" height="11" viewBox="0 0 11 11"><path d="M1.5 1.5v8M1.5 5.5h3M1.5 9h3" stroke="#4a7ac0" stroke-width="0.8" fill="none"/><rect x="0.3" y="0.5" width="2.4" height="2" fill="#5a90d8"/><rect x="4" y="4.5" width="2.2" height="2" fill="#5a90d8"/><rect x="4" y="8" width="2.2" height="2" fill="#5a90d8"/><path d="M4.5 1.5h6M7.5 5.5h3M7.5 9h3" stroke="#5a90d8" stroke-width="1"/></svg>
<svg class="a" style="left:232.5px;top:586px" width="14" height="15" viewBox="0 0 14 15"><path d="M3.5 0.5h6.5l3 3v11h-9.5z" fill="#e4ecf6" stroke="#98a8c0" stroke-width="0.8"/><path d="M6 5.5h5M6 8h5M6 10.5h5M6 13h5" stroke="#8aa0c8" stroke-width="0.7"/><path d="M0.5 11.5L4.5 3.5 8.5 11.5z" fill="#2a6ab8"/><path d="M4.5 6.5v2.5" stroke="#e8f0ff" stroke-width="1"/></svg>
<svg class="a" style="left:23px;top:617.5px" width="10" height="5" viewBox="0 0 10 5"><path d="M0.6 0.6h8.8l-4.4 3.8z" fill="#f4f4f4" stroke="#151515" stroke-width="1"/></svg>
<div class="a" style="left:7px;top:656px;width:259.5px;height:19px;background:#4a90d9;"></div>
<svg class="a" style="left:43px;top:641.5px" width="6" height="9" viewBox="0 0 6 9"><path d="M0.5 0.5L5 4.5 0.5 8.5z" fill="#f0f0f0"/></svg>
<svg class="a" style="left:54px;top:640.5px" width="13" height="11" viewBox="0 0 13 11"><path d="M0.5 1.5h4l1 1h5v2h-8.5l-2 6z" fill="#d8a850" stroke="#a07830" stroke-width="0.7"/><path d="M2.5 4.5h10l-2 6h-10z" fill="#f8d890" stroke="#b88840" stroke-width="0.7"/></svg>
<div class="t " style="left:70px;top:638.8px;color:#dedede">images</div>
<svg class="a" style="left:41px;top:662px" width="10" height="6" viewBox="0 0 10 6"><path d="M0.5 0.5h9L5 5z" fill="#f8f8f8"/></svg>
<svg class="a" style="left:54px;top:659.5px" width="13" height="11" viewBox="0 0 13 11"><path d="M0.5 1.5h4l1 1h5v2h-8.5l-2 6z" fill="#d8a850" stroke="#a07830" stroke-width="0.7"/><path d="M2.5 4.5h10l-2 6h-10z" fill="#f8d890" stroke="#b88840" stroke-width="0.7"/></svg>
<svg class="a" style="left:69.5px;top:657.5px" width="104" height="15" viewBox="0 0 104 15"><path d="M0.7 2.3H13V0.8L30 0.7V2.3H103.3V13.7H89V14.5H80V13.7H66V14.6H50V13.7H40V14.7H20V13.8H0.7z" fill="#4a9600"/></svg>
<div class="t " style="left:70px;top:657.8px;color:#e2f000;letter-spacing:0.1px">interface_axi_lite</div>
<svg class="a" style="left:59px;top:679.5px" width="6" height="9" viewBox="0 0 6 9"><path d="M0.5 0.5L5 4.5 0.5 8.5z" fill="#f0f0f0"/></svg>
<svg class="a" style="left:69px;top:678.5px" width="13" height="11" viewBox="0 0 13 11"><path d="M0.5 1.5h4l1 1h5v2h-8.5l-2 6z" fill="#d8a850" stroke="#a07830" stroke-width="0.7"/><path d="M2.5 4.5h10l-2 6h-10z" fill="#f8d890" stroke="#b88840" stroke-width="0.7"/></svg>
<div class="t " style="left:85px;top:676.8px;color:#dedede;letter-spacing:0.1px">proj_axi_lite</div>
<svg class="a" style="left:71.0px;top:698.0px" width="10" height="12" viewBox="0 0 10 12"><path d="M0.5 0.5h5.8l2.7 2.7v8.3h-8.5z" fill="#eef3fa" stroke="#d0b060" stroke-width="0.8"/><path d="M7.4 5.6A2.3 2.5 0 1 0 7.4 9.4" stroke="#3a70b8" stroke-width="1.7" fill="none"/><rect x="1.6" y="9" width="1.3" height="1.3" fill="#3a70b8"/></svg>
<div class="t " style="left:85px;top:695.8px;color:#dedede;letter-spacing:0.25px">example.cpp</div>
<svg class="a" style="left:71.0px;top:717.0px" width="10" height="12" viewBox="0 0 10 12"><path d="M0.5 0.5h5.8l2.7 2.7v8.3h-8.5z" fill="#eef3fa" stroke="#d0b060" stroke-width="0.8"/><path d="M7.4 5.6A2.3 2.5 0 1 0 7.4 9.4" stroke="#3a70b8" stroke-width="1.7" fill="none"/><rect x="1.6" y="9" width="1.3" height="1.3" fill="#3a70b8"/></svg>
<div class="t " style="left:85px;top:714.8px;color:#dedede;letter-spacing:0.25px">example_test.cpp</div>
<svg class="a" style="left:70.5px;top:734.5px" width="10" height="13" viewBox="0 0 10 13"><path d="M0.5 0.5h6l3 3v9h-9z" fill="#eef2f8" stroke="#a8b4c8" stroke-width="0.8"/><path d="M2 4.5h5M2 6.5h6M2 8.5h6M2 10.5h6" stroke="#5a7ab0" stroke-width="0.9"/></svg>
<div class="t " style="left:85px;top:733.8px;color:#dedede;letter-spacing:-0.7px">README</div>
<svg class="a" style="left:5px;top:764px" width="14" height="11" viewBox="0 0 14 11"><path d="M0.5 1.5h4l1 1h5v2h-8.5l-2 6z" fill="#d8a850" stroke="#a07830" stroke-width="0.7"/><path d="M2.5 4.5h10l-2 6h-10z" fill="#f8d890" stroke="#b88840" stroke-width="0.7"/></svg>
<div class="t " style="left:22px;top:763.5px;color:#e0e0e0;letter-spacing:0.2px">1 item selected</div>
<div class="a" style="left:731px;top:763px;width:2px;height:3px;background:#b8b39e;border-radius:1px"></div><div class="a" style="left:731px;top:768px;width:2px;height:3px;background:#b8b39e;border-radius:1px"></div><div class="a" style="left:731px;top:773px;width:2px;height:3px;background:#b8b39e;border-radius:1px"></div><div class="a" style="left:731px;top:778px;width:2px;height:3px;background:#b8b39e;border-radius:1px"></div>
<div class="a" style="left:0px;top:785px;width:999px;height:2px;background:#ececec;"></div>
<div class="a" style="left:181px;top:667.6px;width:292.3px;height:120px;background:#ffffff;overflow:hidden"><div class="a" style="left:0px;top:43.6px;width:292.3px;height:20.1px;background:#4a90d9;"></div><svg class="a" style="left:23.5px;top:47px" width="162" height="14" viewBox="0 0 162 14"><path d="M0.5 0.5H161V12.2H120V12.8H100V13.3H60V13H30V13.5H0.5z" fill="#4a9600"/></svg><div class="a" style="left:1px;top:86px;width:290px;height:1px;background:#e4e4e4;"></div></div>
<svg class="a" style="left:207px;top:673.5px" width="12" height="12" viewBox="0 0 12 12"><path d="M4 0.5h4v3.5h3.5v4H8v3.5H4V8H0.5V4H4z" fill="#a8d860" stroke="#70a830" stroke-width="0.8"/></svg>
<div class="t " style="left:225.4px;top:672.5px;color:#3c3c3c">Add to Index</div>
<svg class="a" style="left:207.5px;top:694px" width="12" height="12" viewBox="0 0 12 12"><path d="M2 2L10 10M10 2L2 10" stroke="#e03840" stroke-width="3" stroke-linecap="round"/></svg>
<div class="t " style="left:225px;top:693.5px;color:#3c3c3c"><u>D</u>elete</div>
<div class="t " style="left:206.5px;top:713.6px;color:#e2f000;letter-spacing:-0.18px">Run And Open HLS Project</div>
<div class="t " style="left:206.5px;top:735.4px;color:#3c3c3c">Sho<u>w</u> In</div>
<div class="t " style="left:369px;top:735.4px;color:#a0a0a0;letter-spacing:0.35px">Shift+Alt+W</div>
<svg class="a" style="left:460px;top:738.5px" width="5" height="8" viewBox="0 0 5 8"><path d="M0 0l4.5 4L0 8z" fill="#222"/></svg>
<div class="t " style="left:206.5px;top:758px;color:#3c3c3c"><u>C</u>opy Path to Clipboard</div>
<div class="t " style="left:426px;top:758px;color:#a0a0a0">Ctrl+C</div>
<div class="t " style="left:206.5px;top:780px;color:#3c3c3c">Paste Repository Path or URI</div>
<div class="t " style="left:426px;top:780px;color:#a0a0a0">Ctrl+V</div>
<div class="a" style="left:998px;top:1px;width:1px;height:20px;background:#f8f8f8;"></div>
<div class="a" style="left:998px;top:22px;width:1px;height:763px;background:linear-gradient(#33373a,#3a3d40 10%,#8a8a8a 36%,#9a9a9a);"></div>
<div class="a" style="left:0px;top:0px;width:1px;height:787px;background:linear-gradient(#0a0a0a,#111 12%,#333 38%,#333);"></div>
<div class="a" style="left:1px;top:0px;width:1px;height:787px;background:linear-gradient(#0e0e0e,#111 11%,#4a4a4a 18%,#8a8a8a 38%,#8e8e8e);"></div>
</body></html>
